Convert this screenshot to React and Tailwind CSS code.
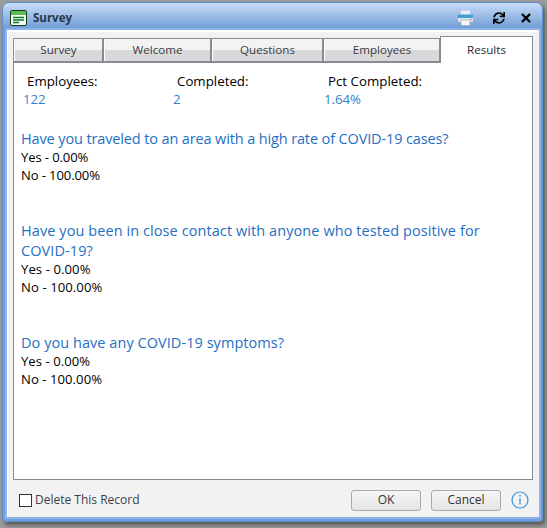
import { FaSync } from 'react-icons/fa';

const font = { fontFamily: '"Open Sans", "Noto Sans", sans-serif' };

const tabs = [
  { label: 'Survey', w: 'w-[90px]' },
  { label: 'Welcome', w: 'w-[108px]' },
  { label: 'Questions', w: 'w-[112px]' },
  { label: 'Employees', w: 'w-[117px]' },
];

const questions = [
  { q: 'Have you traveled to an area with a high rate of COVID-19 cases?', cls: 'mt-[21px] tracking-[-0.13px]' },
  { q: 'Have you been in close contact with anyone who tested positive for COVID-19?', cls: 'mt-[37px] tracking-[0.08px]' },
  { q: 'Do you have any COVID-19 symptoms?', cls: 'mt-[37px] tracking-[0.05px]' },
];

function Stat({ label, value, w }) {
  return (
    <div className={`${w} shrink-0`}>
      <div className="pl-[4px] text-[13.3px] leading-[18px] text-black">{label}</div>
      <div className="text-[13.2px] leading-[18px] text-[#2f7fd0]">{value}</div>
    </div>
  );
}

function Question({ q, cls }) {
  return (
    <div className={cls}>
      <div className="text-[14.5px] leading-[20px] -mb-[1px] text-[#1f6fc4]">{q}</div>
      <div className="text-[13.1px] leading-[18px] text-black">Yes - 0.00%</div>
      <div className="text-[13.1px] leading-[18px] text-black">No - 100.00%</div>
    </div>
  );
}

function PrinterIcon() {
  return (
    <svg width="17" height="16" viewBox="0 0 17 16" className="shrink-0">
      <rect x="4" y="0.5" width="9" height="5" rx="0.5" fill="#e9eef3" />
      <rect x="1" y="4" width="15" height="8" rx="1.5" fill="#dfe5ea" />
      <rect x="1" y="4.5" width="15" height="3.5" fill="#3f9fd6" />
      <rect x="4" y="10" width="9" height="5.5" fill="#f5f6f7" stroke="#8c96a0" strokeWidth="0.5" />
      <rect x="13.5" y="9" width="1.2" height="1" fill="#d9534f" />
    </svg>
  );
}

function FormIcon() {
  return (
    <svg width="17" height="16" viewBox="0 0 17 16" className="shrink-0">
      <rect x="0.5" y="0.5" width="16" height="15" rx="1.5" fill="#f4fbf2" stroke="#123d1c" />
      <rect x="1" y="1" width="15" height="4" fill="#5dbb55" />
      <path d="M3 7.5h11M3 10h11M3 12.5h6" stroke="#127a2a" strokeWidth="1.3" />
    </svg>
  );
}

function FooterButton({ children, cls }) {
  return (
    <button className={`${cls} w-[70px] h-[21px] rounded-[3px] border border-[#a9a9a9] bg-gradient-to-b from-[#f6f6f6] to-[#e4e4e4] text-[12px] text-[#333]`}>
      {children}
    </button>
  );
}

export default function App() {
  return (
    <div style={font} className="w-[547px] h-[528px] overflow-hidden bg-[#9c9c9c] pl-[2px] pt-[2px]">
      <div className="w-[541px] h-[520px] flex flex-col rounded-t-[7px] rounded-b-[4px] bg-[linear-gradient(#c9dcf6_0,#6596d2_28px,#6f9fdc_28px)] border border-[#5f8fcc] shadow-[2px_3px_4px_rgba(40,40,40,0.6)] pl-[4px] pr-[3px] pb-[4px]">
        {/* Title bar */}
        <div className="h-[27px] shrink-0 flex items-center pt-[3px] pl-[3px] pr-[8px]">
          <FormIcon />
          <span className="ml-[6px] text-[11.5px] font-bold text-[#27384f]">Survey</span>
          <span className="ml-auto"><PrinterIcon /></span>
          <FaSync size={12} className="ml-[19px] text-black" />
          <svg width="10" height="10" viewBox="0 0 10 10" className="ml-[16px]">
            <path d="M1 1l8 8M9 1l-8 8" stroke="#000" strokeWidth="2.4" />
          </svg>
        </div>

        {/* Body */}
        <div className="flex-1 flex flex-col border-l border-t-2 border-white bg-[#f2f2f2] shadow-[0_0_0_2px_#8db2ea] pl-[5px] pr-[6px] pt-[4px] min-h-0">
          <div className="flex h-[25px] shrink-0 items-end">
            {tabs.map((t) => (
              <div
                key={t.label}
                className={`${t.w} h-[23px] shrink-0 flex border border-b-0 border-[#8a8a94]`}
              >
                <div className="flex-1 flex items-center justify-center border-l border-white bg-gradient-to-b from-[#f3f3f3] from-50% to-[#d9d9d9] to-50% text-[11.6px] text-[#3a3a45]">
                  {t.label}
                </div>
              </div>
            ))}
            <div className="flex-1 h-[27px] -mb-[2px] relative z-10 flex items-center justify-center border border-b-0 border-[#8a8a94] bg-white text-[11.6px] text-[#2c2c35]">
              Results
            </div>
          </div>

          <div className="h-[419px] shrink-0 border border-t-2 border-[#8a8a94] bg-white pl-[7px] pr-[4px] pt-[9px]">
            <div className="flex pl-[2px]">
              <Stat label="Employees:" value="122" w="w-[150px]" />
              <Stat label="Completed:" value="2" w="w-[151px]" />
              <Stat label="Pct Completed:" value="1.64%" w="w-[150px]" />
            </div>
            {questions.map((item) => (
              <Question key={item.q} q={item.q} cls={item.cls} />
            ))}
          </div>

          {/* Footer */}
          <div className="flex-1 flex items-center pt-[3px] pl-[6px] pr-[4px]">
            <span className="w-[13px] h-[13px] shrink-0 border border-[#333] bg-white" />
            <span className="ml-[3px] text-[12px] text-[#3a3f4f]">Delete This Record</span>
            <FooterButton cls="ml-auto">OK</FooterButton>
            <FooterButton cls="ml-[10px]">Cancel</FooterButton>
            <svg width="18" height="18" viewBox="0 0 18 18" className="ml-[10px] shrink-0">
              <circle cx="9" cy="9" r="8" fill="none" stroke="#3d8fd8" strokeWidth="1.2" />
              <path d="M9 7.5v6" stroke="#3d8fd8" strokeWidth="1.3" />
              <circle cx="9" cy="4.8" r="0.9" fill="#3d8fd8" />
            </svg>
          </div>
        </div>
      </div>
    </div>
  );
}
